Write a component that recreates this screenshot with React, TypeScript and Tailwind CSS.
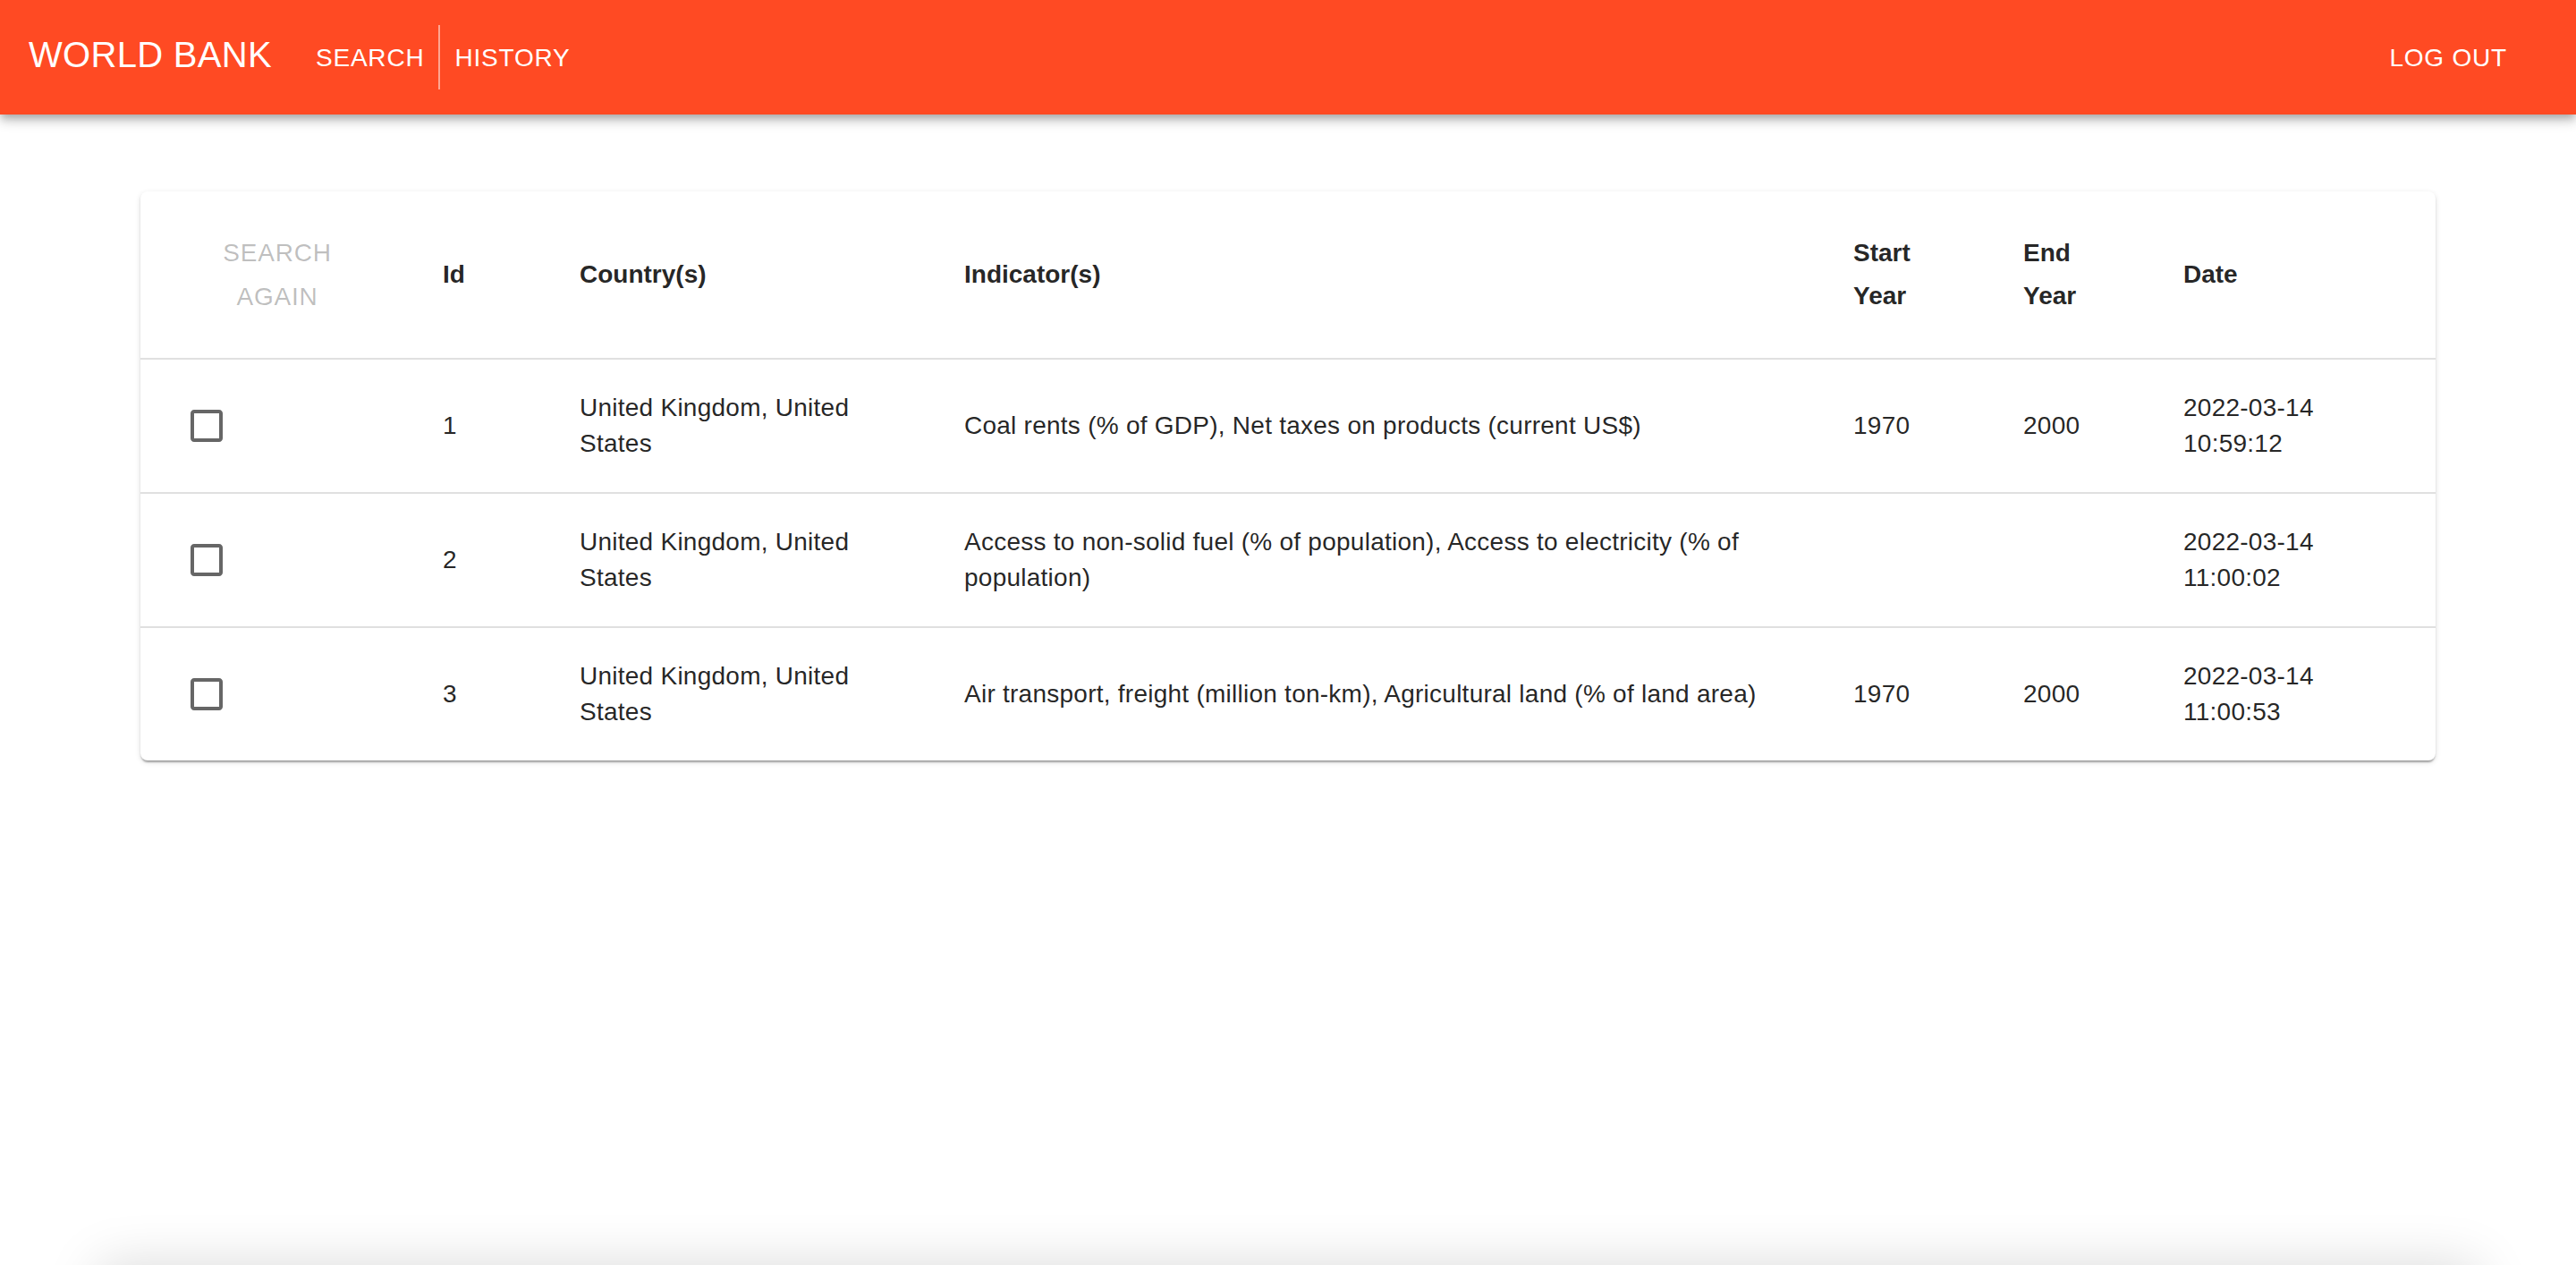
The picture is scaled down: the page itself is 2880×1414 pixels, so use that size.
import type { ReactNode } from "react";

type Search = {
  id: number;
  countries: string;
  indicators: string;
  start: string;
  end: string;
  date: string;
};

const searches: Search[] = [
  {
    id: 1,
    countries: "United Kingdom, United States",
    indicators: "Coal rents (% of GDP), Net taxes on products (current US$)",
    start: "1970",
    end: "2000",
    date: "2022-03-14 10:59:12",
  },
  {
    id: 2,
    countries: "United Kingdom, United States",
    indicators:
      "Access to non-solid fuel (% of population), Access to electricity (% of population)",
    start: "",
    end: "",
    date: "2022-03-14 11:00:02",
  },
  {
    id: 3,
    countries: "United Kingdom, United States",
    indicators:
      "Air transport, freight (million ton-km), Agricultural land (% of land area)",
    start: "1970",
    end: "2000",
    date: "2022-03-14 11:00:53",
  },
];

function NavButton({ children }: { children: ReactNode }) {
  return (
    <button className="px-[16px] py-[12px] text-[28px] leading-[1.75] tracking-[0.8px] uppercase text-white">
      {children}
    </button>
  );
}

function Checkbox() {
  return (
    <span className="inline-flex p-[18px]">
      <svg width="48" height="48" viewBox="0 0 24 24" className="fill-black/60">
        <path d="M19 5v14H5V5h14m0-2H5c-1.11 0-2 .9-2 2v14c0 1.1.89 2 2 2h14c1.1 0 2-.9 2-2V5c0-1.1-.9-2-2-2z" />
      </svg>
    </span>
  );
}

function HeadCell({ children }: { children?: ReactNode }) {
  return (
    <th className="border-b-2 border-[#e0e0e0] px-[32px] py-[32px] text-left align-middle text-[28px] leading-[48px] font-bold text-black/87">
      {children}
    </th>
  );
}

function Cell({ children, last }: { children?: ReactNode; last: boolean }) {
  return (
    <td
      className={`px-[32px] py-[32px] align-middle text-[28px] leading-[40px] tracking-[0.25px] text-black/87 ${
        last ? "" : "border-b-2 border-[#e0e0e0]"
      }`}
    >
      {children}
    </td>
  );
}

export default function App() {
  return (
    <div className="h-[1414px] overflow-hidden bg-white font-['Liberation_Sans',Arial,sans-serif]">
      {/* App bar */}
      <header className="relative z-10 flex h-[128px] items-center bg-[#ff4a23] pl-[32px] pr-[61px] text-white shadow-[0_4px_8px_-2px_rgba(0,0,0,0.2),0_8px_10px_0_rgba(0,0,0,0.14),0_2px_20px_0_rgba(0,0,0,0.12)]">
        <h1 className="mr-[33px] mb-[6px] text-[40px] leading-[1.6] tracking-[0.3px]">
          WORLD BANK
        </h1>
        <NavButton>Search</NavButton>
        <div className="h-[72px] w-[2px] bg-white/50" />
        <NavButton>History</NavButton>
        <div className="ml-auto">
          <NavButton>Log out</NavButton>
        </div>
      </header>

      {/* History table */}
      <main className="h-[1286px] px-[157px] pt-[86px]">
        <div className="overflow-hidden rounded-[8px] bg-white shadow-[0_4px_2px_-2px_rgba(0,0,0,0.2),0_2px_2px_0_rgba(0,0,0,0.14),0_2px_6px_0_rgba(0,0,0,0.12)]">
          <table className="w-full table-fixed border-separate border-spacing-0">
            <colgroup>
              <col className="w-[306px]" />
              <col className="w-[153px]" />
              <col className="w-[430px]" />
              <col className="w-[994px]" />
              <col className="w-[190px]" />
              <col className="w-[179px]" />
              <col className="w-[314px]" />
            </colgroup>
            <thead>
              <tr>
                <th className="border-b-2 border-[#e0e0e0] px-[32px] py-[32px] align-middle">
                  <button
                    disabled
                    className="w-full px-[16px] py-[12px] text-center text-[28px] leading-[49px] font-normal tracking-[0.8px] uppercase text-black/26"
                  >
                    Search again
                  </button>
                </th>
                <HeadCell>Id</HeadCell>
                <HeadCell>Country(s)</HeadCell>
                <HeadCell>Indicator(s)</HeadCell>
                <HeadCell>Start Year</HeadCell>
                <HeadCell>End Year</HeadCell>
                <HeadCell>Date</HeadCell>
              </tr>
            </thead>
            <tbody>
              {searches.map((s, i) => {
                const last = i === searches.length - 1;
                return (
                  <tr key={s.id}>
                    <td
                      className={`py-[32px] pl-[32px] align-middle leading-none ${
                        last ? "" : "border-b-2 border-[#e0e0e0]"
                      }`}
                    >
                      <Checkbox />
                    </td>
                    <Cell last={last}>{s.id}</Cell>
                    <Cell last={last}>{s.countries}</Cell>
                    <Cell last={last}>{s.indicators}</Cell>
                    <Cell last={last}>{s.start}</Cell>
                    <Cell last={last}>{s.end}</Cell>
                    <Cell last={last}>{s.date}</Cell>
                  </tr>
                );
              })}
            </tbody>
          </table>
        </div>
      </main>

      {/* panel just below the fold, only its shadow shows */}
      <div className="mx-[110px] h-[200px] rounded-[8px] bg-white shadow-[0_0_60px_0_rgba(0,0,0,0.15)]" />
    </div>
  );
}
